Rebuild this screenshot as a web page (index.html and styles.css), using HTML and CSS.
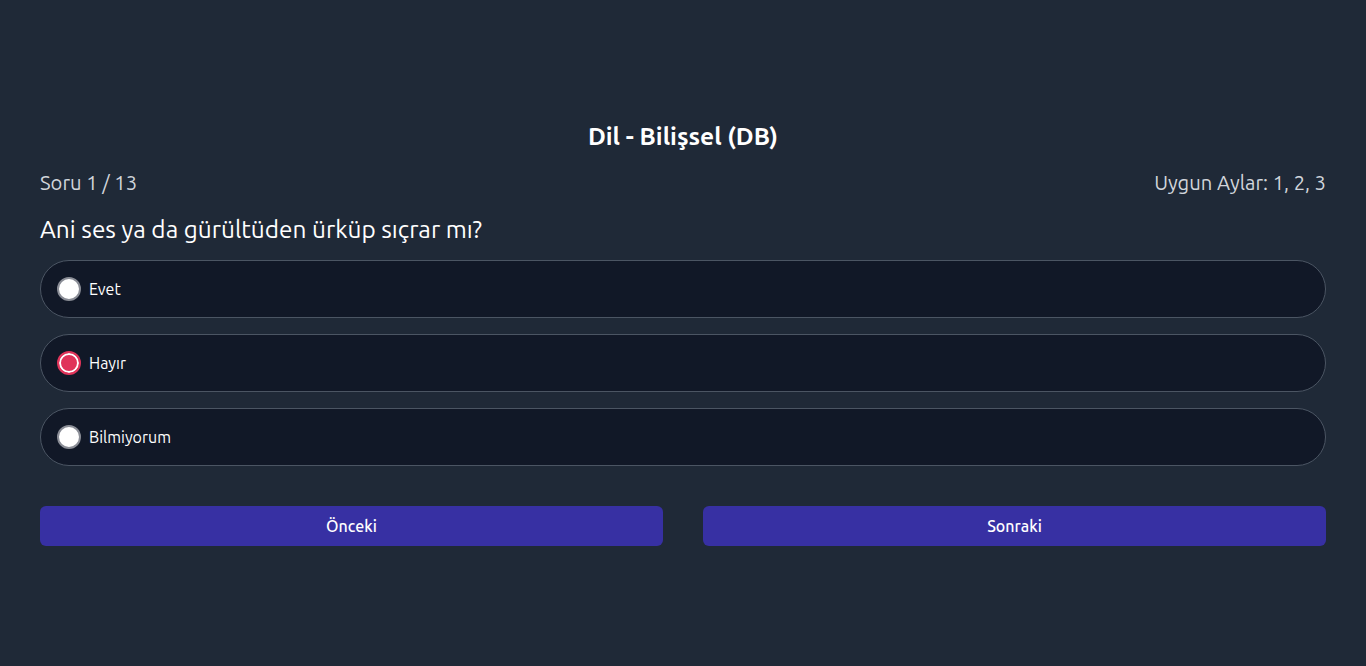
FILE: index.html
```html
<!DOCTYPE html>
<html lang="tr">
<head>
<meta charset="utf-8">
<title>Dil - Bilişsel (DB)</title>
<link rel="stylesheet" href="styles.css">
</head>
<body>
<main class="quiz">
  <h1 class="title">Dil - Bilişsel (DB)</h1>
  <div class="meta">
    <span>Soru 1 / 13</span>
    <span>Uygun Aylar: 1, 2, 3</span>
  </div>
  <p class="question">Ani ses ya da gürültüden ürküp sıçrar mı?</p>
  <div class="options">
    <label class="option"><span class="radio"></span><span class="label">Evet</span></label>
    <label class="option"><span class="radio selected"></span><span class="label">Hayır</span></label>
    <label class="option"><span class="radio"></span><span class="label">Bilmiyorum</span></label>
  </div>
  <div class="actions">
    <button class="btn">Önceki</button>
    <button class="btn">Sonraki</button>
  </div>
</main>
</body>
</html>
```

FILE: styles.css
```css
html, body {
  margin: 0;
  padding: 0;
  background: #1f2937;
  height: 100%;
}
body {
  font-family: "Ubuntu", "Noto Sans", "Open Sans", sans-serif;
  color: #ffffff;
}
.quiz {
  padding: 120px 40px 0;
  display: flex;
  flex-direction: column;
}
.title {
  margin: 0;
  text-align: center;
  font-size: 24.5px;
  font-weight: 700;
  line-height: 32px;
}
.meta {
  margin-top: 17px;
  display: flex;
  justify-content: space-between;
  font-size: 20.2px;
  line-height: 28px;
  color: #d1d5db;
}
.question {
  margin: 16px 0 0;
  font-size: 24.4px;
  line-height: 32px;
}
.options {
  margin-top: 15px;
  display: flex;
  flex-direction: column;
  gap: 16px;
}
.option {
  display: flex;
  align-items: center;
  gap: 8px;
  height: 56px;
  padding: 0 16px;
  background: #111827;
  border: 1px solid #4b5563;
  border-radius: 9999px;
  font-size: 16px;
}
.radio {
  width: 24px;
  height: 24px;
  box-sizing: border-box;
  border-radius: 50%;
  background: #ffffff;
  border: 2px solid #8a8d96;
  flex: none;
}
.radio.selected {
  background: #e0345a;
  border-color: #e0345a;
  box-shadow: inset 0 0 0 2px #ffffff;
}
.actions {
  margin-top: 40px;
  display: flex;
  gap: 40px;
}
.btn {
  flex: 1;
  height: 40px;
  border: none;
  border-radius: 6px;
  background: #3730a3;
  color: #ffffff;
  font-family: inherit;
  font-size: 16px;
  font-weight: 500;
}
```
